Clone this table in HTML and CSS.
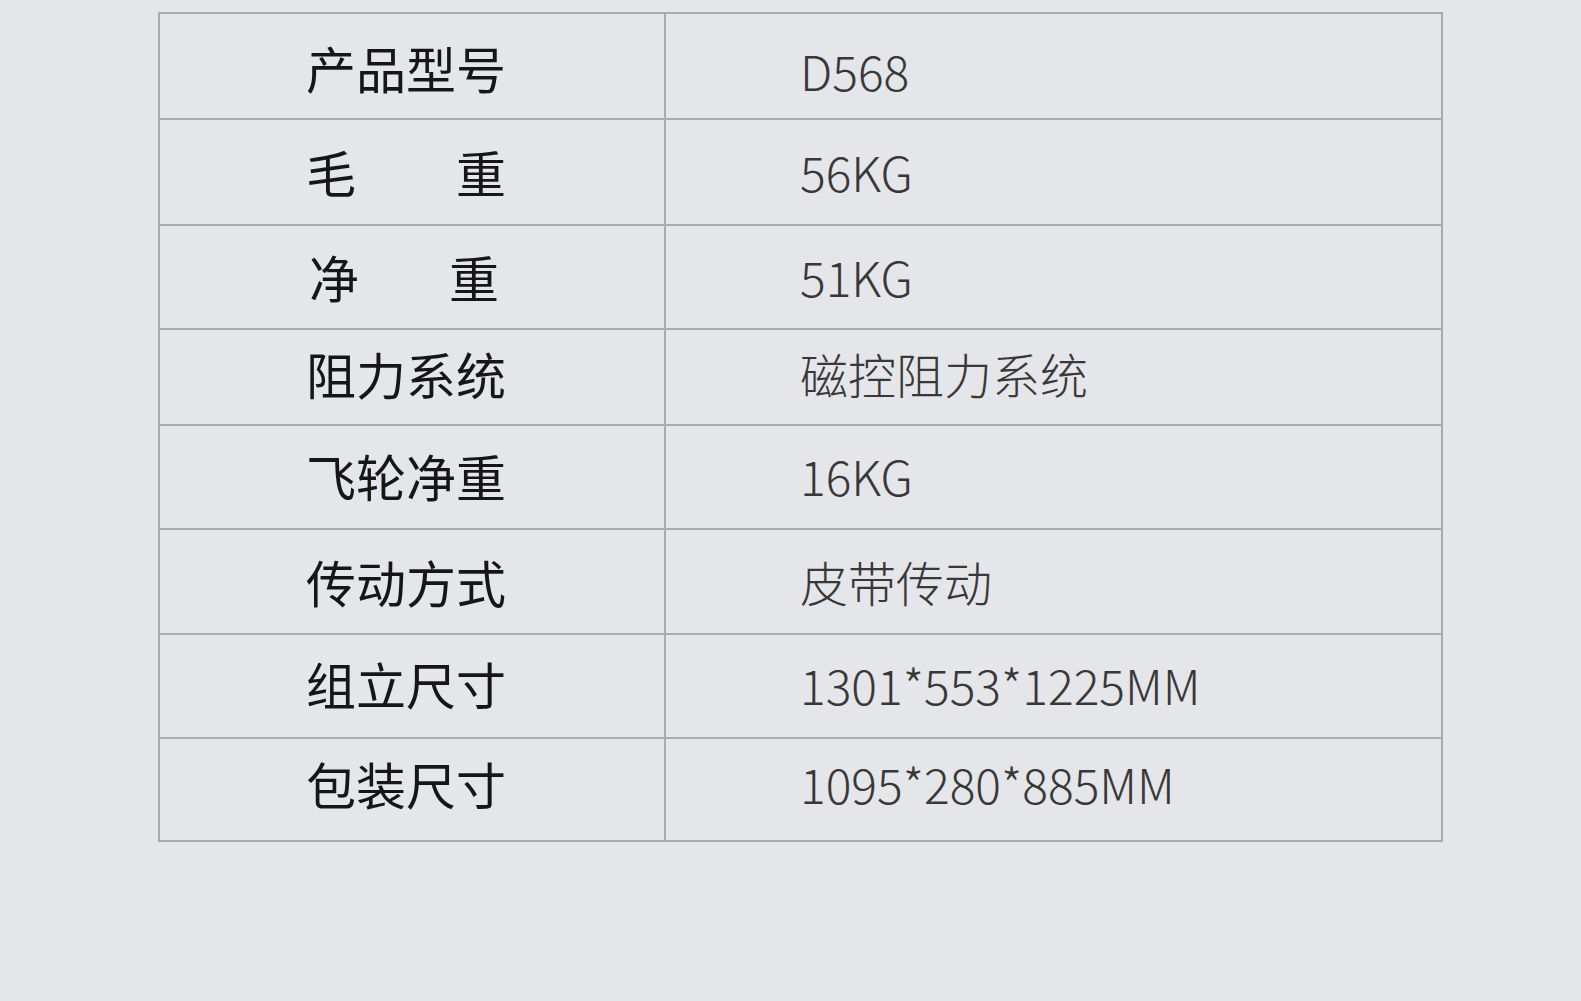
FILE: index.html
```html
<!DOCTYPE html>
<html>
	<head>
		<meta charset="utf-8">
		<title>产品参数</title>
		<link rel="stylesheet" href="styles.css">
	</head>
	<body>
		<div class="spec">
			<table class="spec-table">
				<tr>
					<td class="name"><span>产品型号</span></td>
					<td class="val">D568</td>
				</tr>
				<tr>
					<td class="name"><span class="wide">毛 重</span></td>
					<td class="val">56KG</td>
				</tr>
				<tr>
					<td class="name"><span class="wide short">净 重</span></td>
					<td class="val">51KG</td>
				</tr>
				<tr>
					<td class="name"><span>阻力系统</span></td>
					<td class="val">磁控阻力系统</td>
				</tr>
				<tr>
					<td class="name"><span>飞轮净重</span></td>
					<td class="val">16KG</td>
				</tr>
				<tr>
					<td class="name"><span>传动方式</span></td>
					<td class="val">皮带传动</td>
				</tr>
				<tr>
					<td class="name"><span>组立尺寸</span></td>
					<td class="val">1301*553*1225MM</td>
				</tr>
				<tr>
					<td class="name"><span>包装尺寸</span></td>
					<td class="val">1095*280*885MM</td>
				</tr>
			</table>
		</div>
	</body>
</html>
```

FILE: styles.css
```css
*{
    padding:0;
    margin:0;
    font-family: "Noto Sans CJK SC", "Noto Sans", sans-serif;
}
html,body{
    height:100%;
}
body{
    background:#e5e6ea;
}
.spec{
    padding:12px 0 0 158px;
}
.spec-table{
    width:1285px;
    border-collapse: collapse;
    border:2px solid #a4a5a9;
}
.spec-table td{
    box-sizing: border-box;
    border:2px solid #aaabaf;
    vertical-align: middle;
    padding-bottom:2px;
}
/* 行高按原图逐行量出来的 */
.spec-table tr:nth-child(1) td{ height:106px; padding-top:1px; padding-bottom:0; }
.spec-table tr:nth-child(1) .val{ padding-top:8px; }
.spec-table tr:nth-child(2) td{ height:106px; }
.spec-table tr:nth-child(3) td{ height:104px; }
.spec-table tr:nth-child(4) td{ height:96px; padding-bottom:8px; }
.spec-table tr:nth-child(5) td{ height:104px; padding-bottom:4px; }
.spec-table tr:nth-child(6) td{ height:105px; }
.spec-table tr:nth-child(7) td{ height:104px; padding-bottom:4px; }
.spec-table tr:nth-child(7) .name{ padding-bottom:7px; }
.spec-table tr:nth-child(8) td{ height:103px; padding-bottom:14px; }
.spec-table td.name{
    width:506px;
    padding-left:146px;
    font-size:50px;
    font-weight:400;
    color:#161616;
}
.name span{
    display:inline-block;
    width:200px;
    line-height:56px;
}
.name .wide{
    text-align: justify;
    text-align-last: justify;
}
.name .short{
    width:190px;
    margin-left:3px;
}
.spec-table td.val{
    padding-left:134px;
    font-size:48px;
    font-weight:300;
    color:#383838;
    line-height:56px;
}
```
